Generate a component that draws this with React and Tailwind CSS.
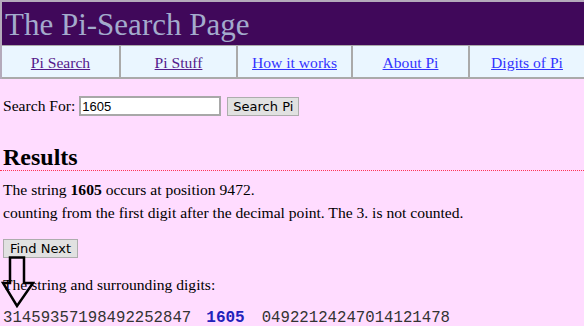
import React from "react";

const navLinks = [
  { label: "Pi Search", w: "w-[119px]", visited: true },
  { label: "Pi Stuff", w: "w-[117px]", visited: true },
  { label: "How it works", w: "w-[115px]", visited: false },
  { label: "About Pi", w: "w-[117px]", visited: false },
  { label: "Digits of Pi", w: "flex-1", visited: false },
];

const serif = { fontFamily: '"Liberation Serif", "Times New Roman", serif' };
const btnFont = { fontFamily: '"DejaVu Sans", Tahoma, sans-serif' };

const App = () => {
  return (
    <div
      className="relative w-[584px] h-[326px] overflow-hidden bg-[#ffdcff] text-black"
      style={serif}
    >
      <div className="border-t-2 border-l-2 border-[#b4aabb]">
        <div className="h-[43px] bg-[#40085a] pl-[3px] flex items-center">
          <h1 className="text-[31px] leading-none text-[#a3abcc] pt-[1px]">
            The Pi-Search Page
          </h1>
        </div>
        <div className="flex h-[34px] bg-[#eaf6ff] border-t border-b-2 border-[#aaaaaa]">
          {navLinks.map((l, i) => (
            <div
              key={l.label}
              className={`${l.w} flex items-center justify-center ${
                i < navLinks.length - 1 ? "border-r-2 border-[#aaaaaa]" : ""
              }`}
            >
              <a
                href="#"
                className={`text-[15.6px] underline pt-[2px] ${
                  l.visited ? "text-[#551a8b]" : "text-[#3333ff]"
                }`}
              >
                {l.label}
              </a>
            </div>
          ))}
        </div>
      </div>

      <div className="pl-[3px]">
        <form className="flex items-center gap-[4px] mt-[16px] h-[22px]">
          <label className="text-[15.6px]">Search For:</label>
          <input
            type="text"
            defaultValue="1605"
            className="w-[142px] h-[20px] border-2 border-[#a8a8a8] bg-white text-[13px] px-[1px] outline-none"
            style={{ fontFamily: '"Liberation Sans", Arial, sans-serif' }}
          />
          <button
            type="button"
            className="ml-[2px] w-[72px] h-[19px] bg-[#e1e1e1] border border-[#adadad] text-[13px] leading-none"
            style={btnFont}
          >
            Search Pi
          </button>
        </form>

        <h2 className="mt-[28px] text-[24px] font-bold leading-none">Results</h2>
      </div>
      <div className="mt-[1px] border-b border-dotted border-[#ff3355]"></div>

      <div className="pl-[3px]">
        <p className="mt-[7px] text-[15.6px] leading-[23px]">
          The string <b>1605</b> occurs at position 9472.
          <br />
          counting from the first digit after the decimal point. The 3. is not
          counted.
        </p>
        <button
          type="button"
          className="mt-[15px] w-[75px] h-[19px] bg-[#e1e1e1] border border-[#adadad] text-[13px] leading-none"
          style={btnFont}
        >
          Find Next
        </button>
        <p className="mt-[16px] text-[15.6px] leading-[18px]">
          The string and surrounding digits:
        </p>
        <p
          className="mt-[16px] text-[15.7px] leading-[16px] text-[#333333] whitespace-pre flex"
          style={{ fontFamily: '"Liberation Mono", "Courier New", monospace' }}
        >
          <span>31459357198492252847</span>
          <b className="ml-[15px] mr-[17px] text-[16px] text-[#2222bb]">1605</b>
          <span>04922124247014121478</span>
        </p>
      </div>

      <svg
        className="absolute left-[1px] top-[256px]"
        width="34"
        height="52"
        viewBox="0 0 34 52"
      >
        <polygon
          points="9,1.5 23,1.5 23,27 32,27 16,50 2,27 9,27"
          fill="none"
          stroke="#000"
          strokeWidth="2.5"
          strokeLinejoin="miter"
        />
      </svg>
    </div>
  );
};

export default App;
